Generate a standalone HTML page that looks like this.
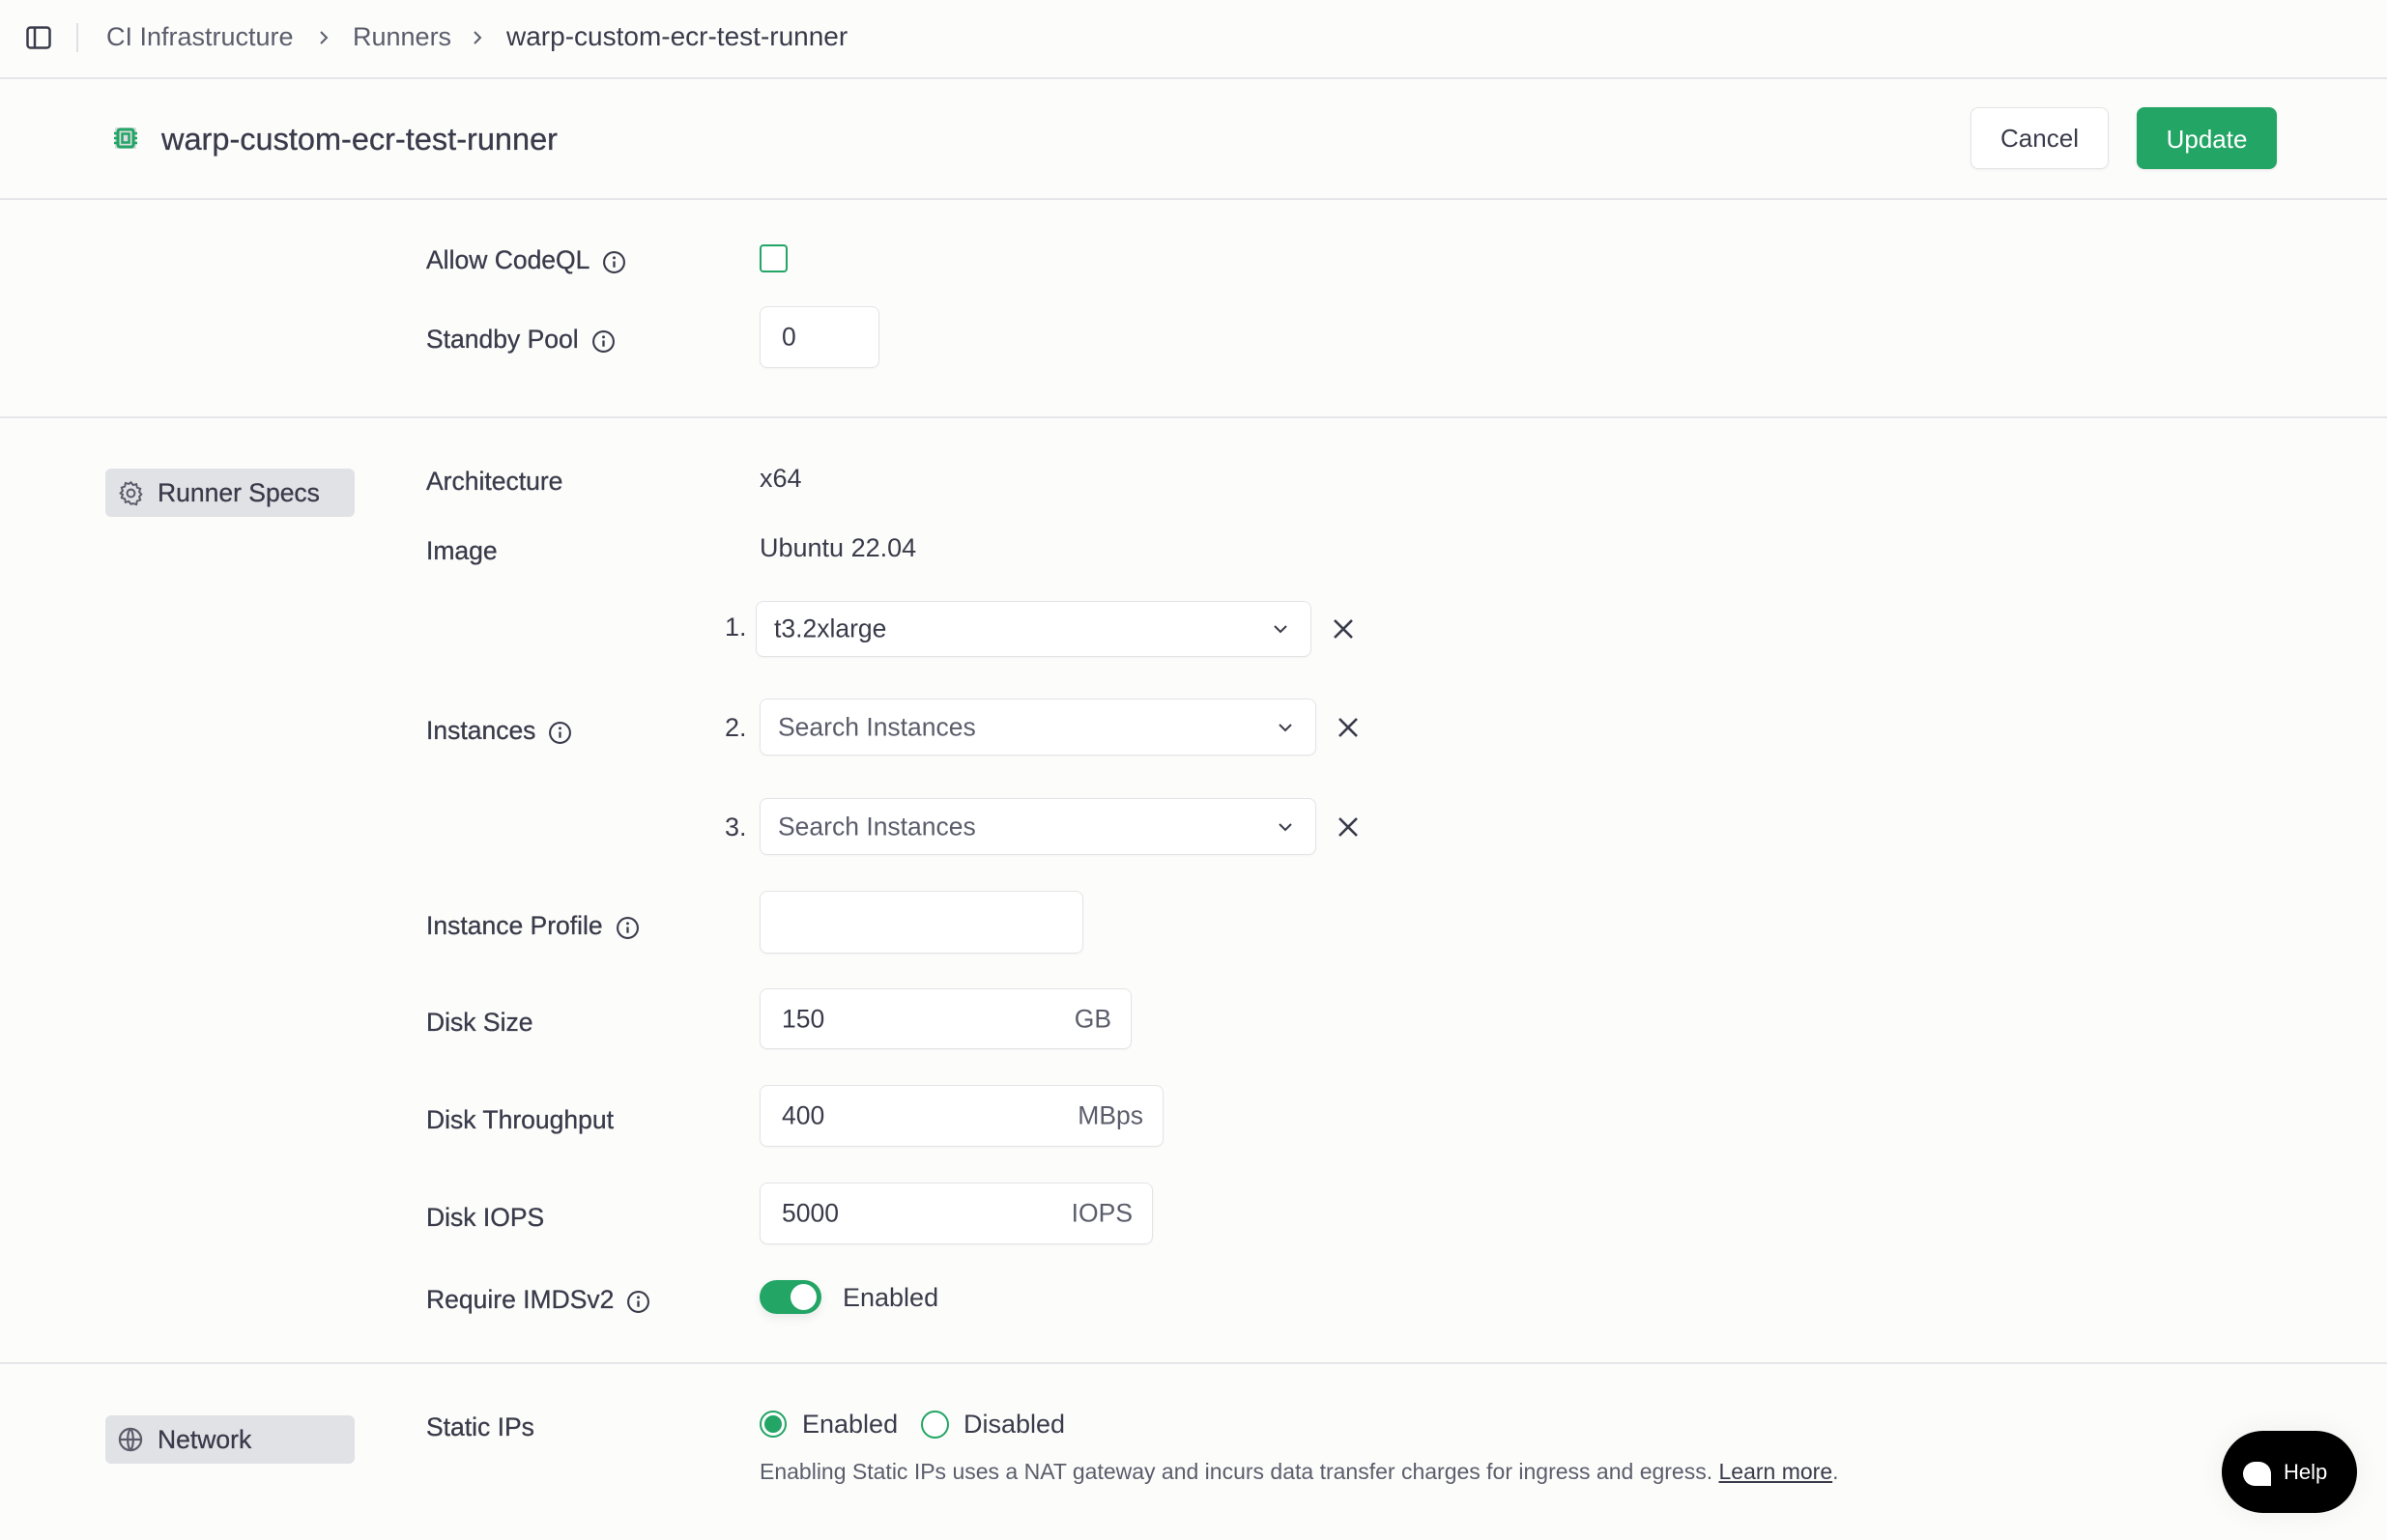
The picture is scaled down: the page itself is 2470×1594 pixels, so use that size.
<!DOCTYPE html>
<html><head><meta charset="utf-8"><style>
*{box-sizing:border-box;margin:0;padding:0}
body{width:2470px;height:1594px;background:#fcfcfb;font-family:"Liberation Sans",sans-serif;color:#3a3b4a;position:relative;overflow:hidden}
.a{position:absolute}
.t{position:absolute;line-height:36px;height:36px;white-space:nowrap}
.lbl{font-size:26.5px;left:441px;color:#3a3b4a;-webkit-text-stroke:0.3px #3a3b4a}
.val{font-size:27px;left:786px;color:#3a3b4a}
.hr{position:absolute;left:0;width:2470px;height:2px;background:#e6e6ea}
.inp{position:absolute;border:1.5px solid #e4e4e8;border-radius:8px;background:#fff;box-shadow:0 1px 2px rgba(0,0,0,.04)}
.inp span{position:absolute;top:50%;transform:translateY(-50%);font-size:26.5px;color:#3a3b4a}
.info{display:inline-block;width:25px;height:25px;vertical-align:middle;margin-left:13px}
.pill{position:absolute;left:109px;width:258px;height:50px;background:#e1e2e6;border-radius:6px}
.pill span{position:absolute;left:54px;top:7px;font-size:26.5px;line-height:36px;-webkit-text-stroke:0.3px #3a3b4a}
</style></head><body>
<svg class="a" style="left:27px;top:27px" width="26" height="24" viewBox="0 0 26 24"><rect x="1.5" y="1.5" width="23" height="21" rx="3" fill="none" stroke="#3a3b4a" stroke-width="2.5"/><line x1="9" y1="2" x2="9" y2="22" stroke="#3a3b4a" stroke-width="2.5"/></svg>
<div class="a" style="left:79px;top:24px;width:1.5px;height:30px;background:#e0e0e4"></div>
<div class="t" style="left:110px;top:20px;font-size:27px;color:#5b5d6b">CI Infrastructure</div>
<svg class="a" style="left:328px;top:30px" width="14" height="18" viewBox="0 0 14 18"><path d="M4 3l6 6-6 6" fill="none" stroke="#5b5d6b" stroke-width="2"/></svg>
<div class="t" style="left:365px;top:20px;font-size:27px;color:#5b5d6b">Runners</div>
<svg class="a" style="left:487px;top:30px" width="14" height="18" viewBox="0 0 14 18"><path d="M4 3l6 6-6 6" fill="none" stroke="#5b5d6b" stroke-width="2"/></svg>
<div class="t" style="left:524px;top:20px;font-size:28px;color:#3a3b4a">warp-custom-ecr-test-runner</div>
<div class="hr" style="top:80px"></div>

<svg class="a" style="left:114px;top:127px" width="32" height="32" viewBox="0 0 32 32"><rect x="5" y="5" width="22" height="22" fill="#dcdde0"/><rect x="8" y="7" width="16" height="18" rx="2" fill="none" stroke="#22a565" stroke-width="3"/><rect x="12.5" y="11.5" width="7" height="9" fill="none" stroke="#22a565" stroke-width="2.5"/><path d="M4 11h4M4 16h4M4 21h4M24 11h4M24 16h4M24 21h4" stroke="#22a565" stroke-width="2.5"/></svg>
<div class="t" style="left:167px;top:126px;font-size:32.5px;color:#3a3b4a;-webkit-text-stroke:0.3px #3a3b4a">warp-custom-ecr-test-runner</div>
<div class="a" style="left:2039px;top:111px;width:143px;height:64px;border:1.5px solid #e4e4e8;border-radius:8px;background:#fff;font-size:26px;text-align:center;line-height:63px;color:#3a3b4a;box-shadow:0 1px 3px rgba(0,0,0,.05)">Cancel</div>
<div class="a" style="left:2211px;top:111px;width:145px;height:64px;border-radius:8px;background:#22a565;font-size:26px;text-align:center;line-height:66px;color:#fff;box-shadow:0 1px 3px rgba(0,0,0,.1)">Update</div>
<div class="hr" style="top:205px"></div>

<div class="t lbl" style="top:251px">Allow CodeQL<svg class="info" viewBox="0 0 24 24"><circle cx="12" cy="12" r="10" fill="none" stroke="#3a3b4a" stroke-width="2"/><path d="M12 11v6" stroke="#3a3b4a" stroke-width="2.2"/><circle cx="12" cy="7.5" r="1.4" fill="#3a3b4a"/></svg></div>
<div class="a" style="left:786px;top:253px;width:29px;height:29px;border:2px solid #22a565;border-radius:4px;background:#fff"></div>
<div class="t lbl" style="top:333px">Standby Pool<svg class="info" viewBox="0 0 24 24"><circle cx="12" cy="12" r="10" fill="none" stroke="#3a3b4a" stroke-width="2"/><path d="M12 11v6" stroke="#3a3b4a" stroke-width="2.2"/><circle cx="12" cy="7.5" r="1.4" fill="#3a3b4a"/></svg></div>
<div class="inp" style="left:786px;top:317px;width:124px;height:64px"><span style="left:22px">0</span></div>
<div class="hr" style="top:431px"></div>

<div class="pill" style="top:485px"><svg class="a" style="left:13px;top:12px" width="27" height="27" viewBox="0 0 24 24"><path d="M12 2l2 2.5 3-.8.6 3.1 3 1-1 3 2 2.2-2 2.2 1 3-3 1-.6 3.1-3-.8L12 22l-2-2.5-3 .8-.6-3.1-3-1 1-3L2.4 12l2-2.2-1-3 3-1 .6-3.1 3 .8z" fill="none" stroke="#5b5d6b" stroke-width="1.8"/><circle cx="12" cy="12" r="3.5" fill="none" stroke="#5b5d6b" stroke-width="1.8"/></svg><span>Runner Specs</span></div>
<div class="t lbl" style="top:480px">Architecture</div>
<div class="t val" style="top:477px">x64</div>
<div class="t lbl" style="top:552px">Image</div>
<div class="t val" style="top:549px">Ubuntu 22.04</div>

<div class="t val" style="left:750px;top:631px">1.</div>
<div class="inp" style="left:782px;top:622px;width:575px;height:58px"><span style="left:18px">t3.2xlarge</span><svg class="a" style="right:22px;top:22px" width="18" height="12" viewBox="0 0 18 12"><path d="M3 3l6 6 6-6" fill="none" stroke="#3a3b4a" stroke-width="2"/></svg></div>
<svg class="a" style="left:1378px;top:639px" width="24" height="24" viewBox="0 0 24 24"><path d="M3 3l18 18M21 3L3 21" stroke="#3a3b4a" stroke-width="2.6"/></svg>
<div class="t lbl" style="top:738px">Instances<svg class="info" viewBox="0 0 24 24"><circle cx="12" cy="12" r="10" fill="none" stroke="#3a3b4a" stroke-width="2"/><path d="M12 11v6" stroke="#3a3b4a" stroke-width="2.2"/><circle cx="12" cy="7.5" r="1.4" fill="#3a3b4a"/></svg></div>
<div class="t val" style="left:750px;top:735px">2.</div>
<div class="inp" style="left:786px;top:723px;width:576px;height:59px"><span style="left:18px;color:#5b5d6b">Search Instances</span><svg class="a" style="right:22px;top:23px" width="18" height="12" viewBox="0 0 18 12"><path d="M3 3l6 6 6-6" fill="none" stroke="#3a3b4a" stroke-width="2"/></svg></div>
<svg class="a" style="left:1383px;top:741px" width="24" height="24" viewBox="0 0 24 24"><path d="M3 3l18 18M21 3L3 21" stroke="#3a3b4a" stroke-width="2.6"/></svg>
<div class="t val" style="left:750px;top:838px">3.</div>
<div class="inp" style="left:786px;top:826px;width:576px;height:59px"><span style="left:18px;color:#5b5d6b">Search Instances</span><svg class="a" style="right:22px;top:23px" width="18" height="12" viewBox="0 0 18 12"><path d="M3 3l6 6 6-6" fill="none" stroke="#3a3b4a" stroke-width="2"/></svg></div>
<svg class="a" style="left:1383px;top:844px" width="24" height="24" viewBox="0 0 24 24"><path d="M3 3l18 18M21 3L3 21" stroke="#3a3b4a" stroke-width="2.6"/></svg>

<div class="t lbl" style="top:940px">Instance Profile<svg class="info" viewBox="0 0 24 24"><circle cx="12" cy="12" r="10" fill="none" stroke="#3a3b4a" stroke-width="2"/><path d="M12 11v6" stroke="#3a3b4a" stroke-width="2.2"/><circle cx="12" cy="7.5" r="1.4" fill="#3a3b4a"/></svg></div>
<div class="inp" style="left:786px;top:922px;width:335px;height:65px"></div>
<div class="t lbl" style="top:1040px">Disk Size</div>
<div class="inp" style="left:786px;top:1023px;width:385px;height:63px"><span style="left:22px">150</span><span style="right:20px;color:#5b5d6b">GB</span></div>
<div class="t lbl" style="top:1141px">Disk Throughput</div>
<div class="inp" style="left:786px;top:1123px;width:418px;height:64px"><span style="left:22px">400</span><span style="right:20px;color:#5b5d6b">MBps</span></div>
<div class="t lbl" style="top:1242px">Disk IOPS</div>
<div class="inp" style="left:786px;top:1224px;width:407px;height:64px"><span style="left:22px">5000</span><span style="right:20px;color:#5b5d6b">IOPS</span></div>
<div class="t lbl" style="top:1327px">Require IMDSv2<svg class="info" viewBox="0 0 24 24"><circle cx="12" cy="12" r="10" fill="none" stroke="#3a3b4a" stroke-width="2"/><path d="M12 11v6" stroke="#3a3b4a" stroke-width="2.2"/><circle cx="12" cy="7.5" r="1.4" fill="#3a3b4a"/></svg></div>
<div class="a" style="left:786px;top:1325px;width:64px;height:35px;border-radius:18px;background:#22a565;box-shadow:0 4px 10px rgba(0,0,0,.08)"><div class="a" style="left:32px;top:4px;width:27px;height:27px;border-radius:50%;background:#fff"></div></div>
<div class="t val" style="left:872px;top:1325px">Enabled</div>
<div class="hr" style="top:1410px"></div>

<div class="pill" style="top:1465px"><svg class="a" style="left:12px;top:11px" width="28" height="28" viewBox="0 0 24 24"><circle cx="12" cy="12" r="9.5" fill="none" stroke="#5b5d6b" stroke-width="1.9"/><path d="M2.5 12h19M12 2.5c-3.2 3.5-3.2 15.5 0 19M12 2.5c3.2 3.5 3.2 15.5 0 19" fill="none" stroke="#5b5d6b" stroke-width="1.9"/></svg><span>Network</span></div>
<div class="t lbl" style="top:1459px">Static IPs</div>
<div class="a" style="left:786px;top:1460px;width:28px;height:28px;border-radius:50%;border:2px solid #22a565;background:#fff"><div class="a" style="left:3px;top:3px;width:18px;height:18px;border-radius:50%;background:#22a565"></div></div>
<div class="t val" style="left:830px;top:1456px">Enabled</div>
<div class="a" style="left:953px;top:1460px;width:29px;height:29px;border-radius:50%;border:2px solid #22a565;background:#fff"></div>
<div class="t val" style="left:997px;top:1456px">Disabled</div>
<div class="t" style="left:786px;top:1505px;font-size:23px;color:#5b5d6b">Enabling Static IPs uses a NAT gateway and incurs data transfer charges for ingress and egress. <span style="text-decoration:underline;color:#3a3b4a">Learn more</span>.</div>

<div class="a" style="left:2299px;top:1481px;width:140px;height:85px;border-radius:43px;background:#000;box-shadow:0 0 30px rgba(0,0,0,.06)"><div class="a" style="left:22px;top:32px;width:29px;height:25px;background:#fff;border-radius:13px 13px 0 13px"></div><div class="t" style="left:64px;top:25px;font-size:22px;color:#fff">Help</div></div>
</body></html>
